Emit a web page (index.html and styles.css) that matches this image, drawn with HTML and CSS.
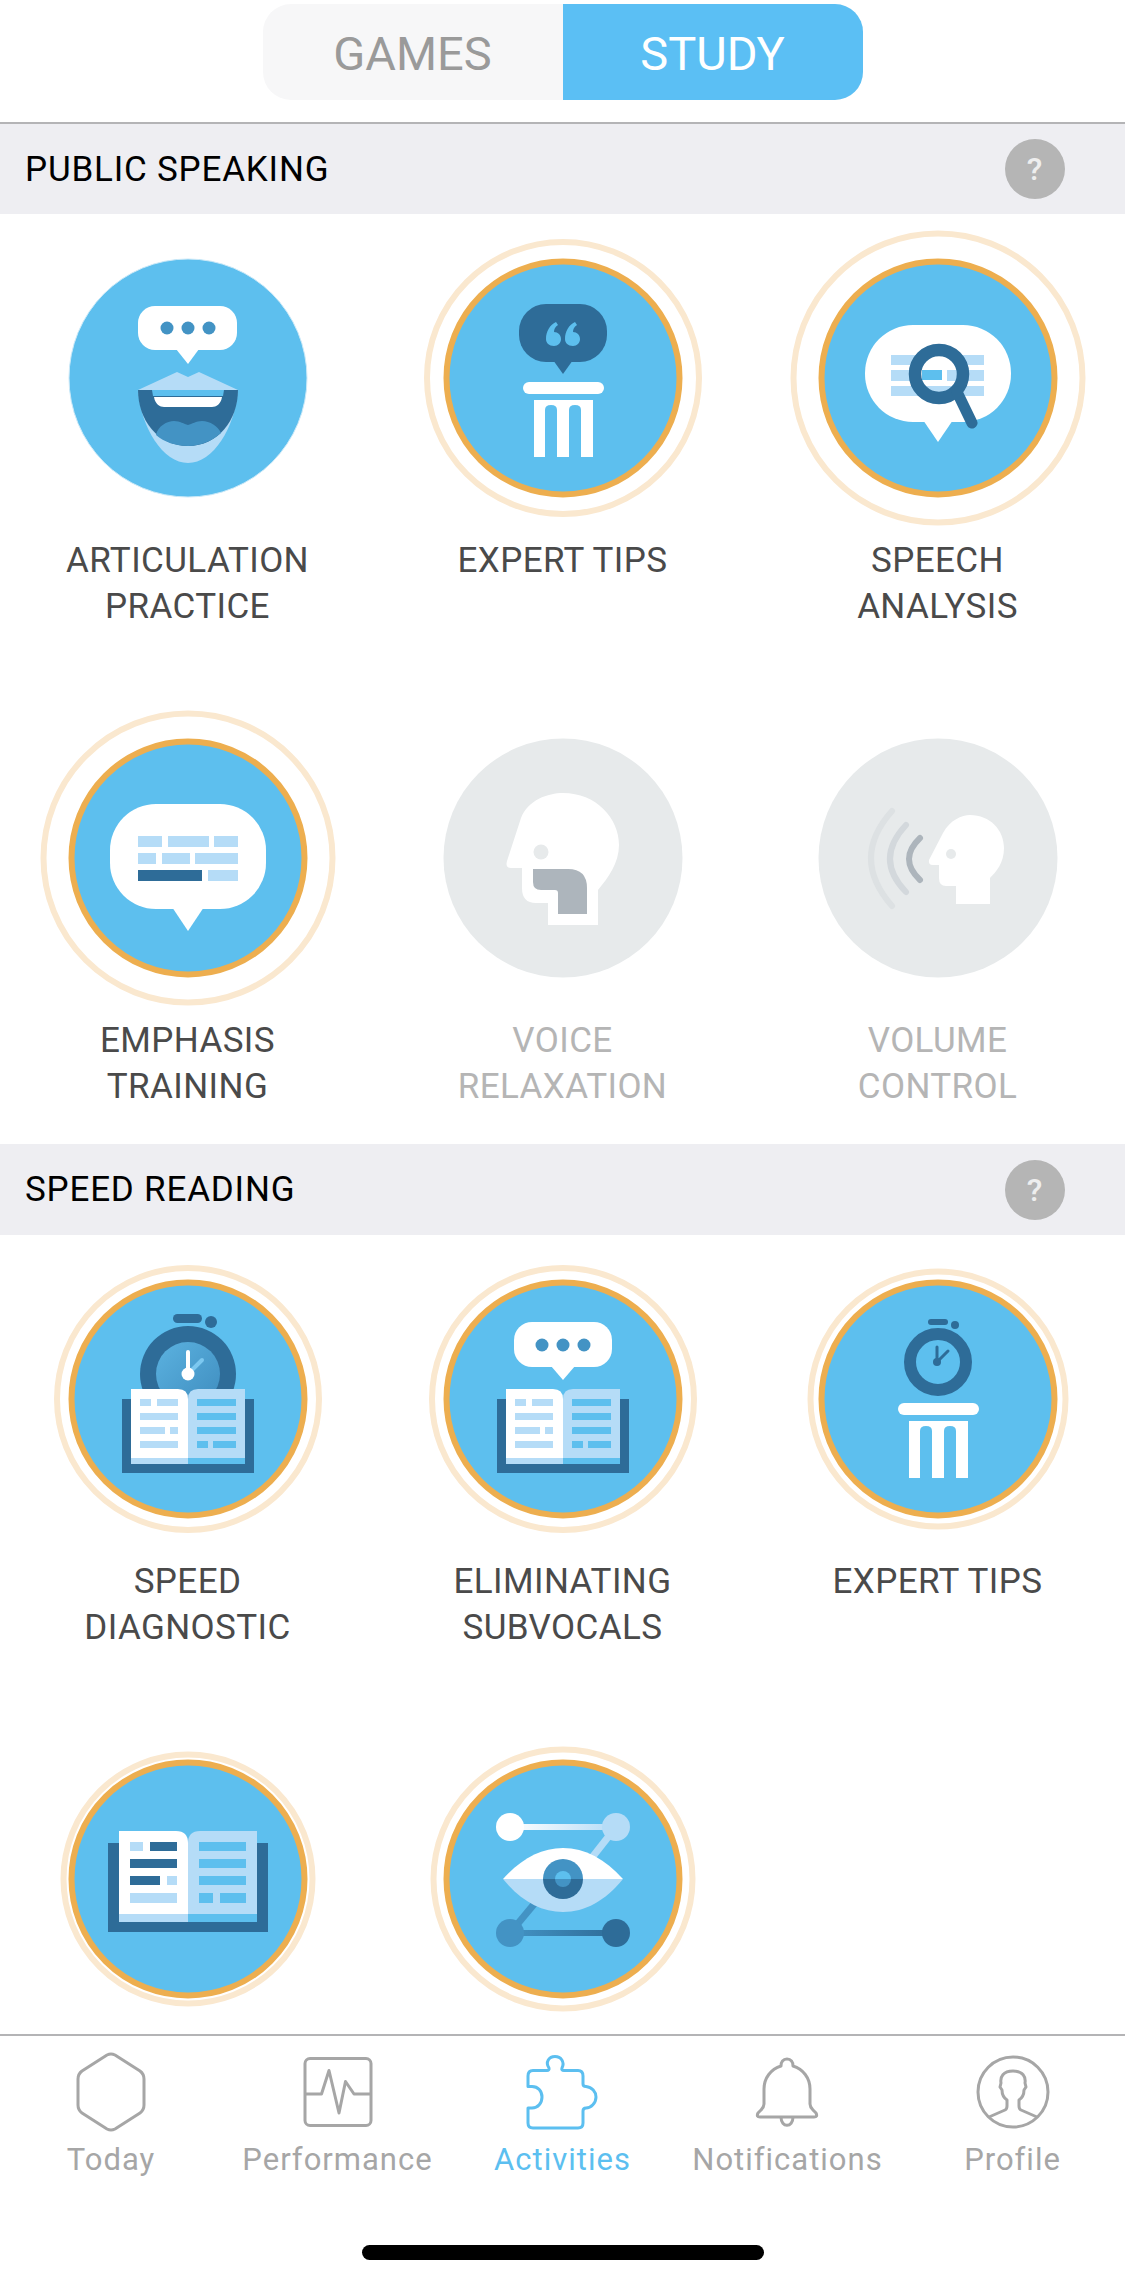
FILE: index.html
```html
<!DOCTYPE html>
<html lang="en">
<head>
    <meta charset="UTF-8">
    <title>Activities</title>
    <link rel="stylesheet" href="styles.css">
</head>
<body>

<svg class="defs" width="0" height="0">
    <defs>
        <linearGradient id="dial" x1="0" y1="0" x2="1" y2="1">
            <stop offset="0" stop-color="#5bb2e0"/>
            <stop offset="1" stop-color="#3f8dbf"/>
        </linearGradient>
        <linearGradient id="lineTop" x1="0" y1="0" x2="1" y2="0">
            <stop offset="0" stop-color="#ffffff"/>
            <stop offset="1" stop-color="#b5dcf7"/>
        </linearGradient>
        <linearGradient id="lineBottom" x1="0" y1="0" x2="1" y2="0">
            <stop offset="0" stop-color="#4393c4"/>
            <stop offset="1" stop-color="#2e6c98"/>
        </linearGradient>
        <clipPath id="lens"><circle cx="1" cy="-4" r="19"/></clipPath>
        <clipPath id="eyeTop"><rect x="-70" y="-40" width="140" height="40"/></clipPath>
        <clipPath id="eyeBottom"><rect x="-70" y="0" width="140" height="40"/></clipPath>

        <!-- open book, the small one -->
        <g id="book">
            <rect class="dark" x="-66" y="0" width="132" height="74"/>
            <path class="white" d="M-57 -10 H-10 Q0 -10 0 0 V65 H-57 Z"/>
            <path class="light" d="M57 -10 H10 Q0 -10 0 0 V65 H57 Z"/>
            <rect class="light" x="-57" y="59" width="57" height="6"/>
            <rect class="blue" x="0" y="59" width="57" height="6"/>
            <rect class="light" x="-48" y="0" width="11" height="7"/>
            <rect class="light" x="-31" y="0" width="21" height="7"/>
            <rect class="light" x="-48" y="14" width="38" height="7"/>
            <rect class="light" x="-48" y="28" width="25" height="7"/>
            <rect class="light" x="-18" y="28" width="8" height="7"/>
            <rect class="light" x="-48" y="42" width="38" height="7"/>
            <rect class="blue" x="9" y="0" width="39" height="7"/>
            <rect class="blue" x="9" y="14" width="39" height="7"/>
            <rect class="blue" x="9" y="28" width="39" height="7"/>
            <rect class="blue" x="9" y="42" width="11" height="7"/>
            <rect class="blue" x="25" y="42" width="23" height="7"/>
        </g>

        <!-- pillar, used by both expert tips -->
        <g id="pillar">
            <rect class="white" x="-40" y="4" width="81" height="12" rx="6"/>
            <path class="white" fill-rule="evenodd" d="M-29 22 H30 V79 H18 V32 Q18 27 12 27 Q6 27 6 32 V79 H-6 V32 Q-6 27 -12 27 Q-18 27 -18 32 V79 H-29 Z"/>
        </g>
    </defs>
</svg>

<div class="app">
    <div class="content">
        <div class="topbar">
            <div class="toggle">
                <div class="toggle-item">GAMES</div>
                <div class="toggle-item active">STUDY</div>
            </div>
        </div>

        <div class="section-head">
            <span>PUBLIC SPEAKING</span>
            <span class="help">?</span>
        </div>
        <div class="grid">
            <div class="item">
                <svg class="badge" viewBox="-150 -150 300 300">
                    <circle class="disc-new" r="119"/>
                    <rect class="white" x="-50" y="-72" width="99" height="44" rx="17"/>
                    <path class="white" d="M-12 -29 H11 L0 -14 Z"/>
                    <circle class="mid" cx="-21" cy="-50" r="6.5"/>
                    <circle class="mid" cx="0" cy="-50" r="6.5"/>
                    <circle class="mid" cx="21" cy="-50" r="6.5"/>
                    <path class="light" d="M-50 12 C-47 50 -25 85 0 85 C25 85 47 50 50 12 Z"/>
                    <path class="dark" d="M-50 12 H50 C50 42 30 68 0 68 C-30 68 -50 42 -50 12 Z"/>
                    <path class="light" d="M-50 12 L-11 -6 L0 -1 L11 -6 L50 12 Z"/>
                    <path class="blue" d="M-36 12 H36 L35 18 H-35 Z"/>
                    <path class="white" d="M-34 19 H34 C33 26 28 29 24 29 H-24 C-28 29 -33 26 -34 19 Z"/>
                    <path class="mid" d="M-32 57 C-30 48 -21 43 -14 43 C-8 43 -4 46 0 47 C4 46 8 43 14 43 C22 43 30 48 33 55 C24 63 12 68 0 68 C-12 68 -24 64 -32 57 Z"/>
                </svg>
                <div class="label">ARTICULATION<br>PRACTICE</div>
            </div>
            <div class="item">
                <svg class="badge" viewBox="-150 -150 300 300">
                    <circle class="halo" r="136"/>
                    <circle class="disc" r="116.5"/>
                    <rect class="dark" x="-44" y="-74" width="88" height="58" rx="27"/>
                    <path class="dark" d="M-10 -18 H10 L0 -4 Z"/>
                    <path class="blue" d="M-17 -39 C-17 -47 -13 -53 -7 -56 L-5 -53 C-8 -51 -9 -49 -9 -46 C-5 -46 -2 -43 -2 -39 C-2 -35 -5 -32 -9 -32 C-14 -32 -17 -35 -17 -39 Z"/>
                    <path class="blue" d="M2 -39 C2 -47 6 -53 12 -56 L14 -53 C11 -51 10 -49 10 -46 C14 -46 17 -43 17 -39 C17 -35 14 -32 10 -32 C5 -32 2 -35 2 -39 Z"/>
                    <use href="#pillar"/>
                </svg>
                <div class="label">EXPERT TIPS</div>
            </div>
            <div class="item">
                <svg class="badge" viewBox="-150 -150 300 300">
                    <circle class="halo" r="144.5"/>
                    <circle class="disc" r="116.5"/>
                    <rect class="white" x="-73" y="-53" width="146" height="97" rx="48"/>
                    <path class="white" d="M-15 42 H15 L0 64 Z"/>
                    <rect class="light" x="-47" y="-23" width="93" height="10"/>
                    <rect class="light" x="-47" y="-8" width="93" height="11"/>
                    <rect class="light" x="-47" y="8" width="93" height="10"/>
                    <circle class="white" cx="1" cy="-4" r="19"/>
                    <g clip-path="url(#lens)">
                        <rect class="light" x="-20" y="8" width="40" height="10"/>
                        <rect class="blue" x="-16" y="-8" width="20" height="10"/>
                        <rect class="light" x="9" y="-8" width="12" height="11"/>
                    </g>
                    <circle class="ring-dark" cx="1" cy="-4" r="24" stroke-width="12.5"/>
                    <path class="ring-dark" stroke-width="11" stroke-linecap="round" d="M19 14 L34 45"/>
                </svg>
                <div class="label">SPEECH<br>ANALYSIS</div>
            </div>
            <div class="item">
                <svg class="badge" viewBox="-150 -150 300 300">
                    <circle class="halo" r="144.5"/>
                    <circle class="disc" r="116.5"/>
                    <rect class="white" x="-78" y="-54" width="156" height="105" rx="46"/>
                    <path class="white" d="M-16 49 H16 L0 73 Z"/>
                    <rect class="light" x="-50" y="-22" width="24" height="11"/>
                    <rect class="light" x="-20" y="-22" width="41" height="11"/>
                    <rect class="light" x="26" y="-22" width="24" height="11"/>
                    <rect class="light" x="-50" y="-5" width="18" height="11"/>
                    <rect class="light" x="-26" y="-5" width="28" height="11"/>
                    <rect class="light" x="7" y="-5" width="43" height="11"/>
                    <rect class="dark" x="-50" y="12" width="64" height="11"/>
                    <rect class="light" x="20" y="12" width="30" height="11"/>
                </svg>
                <div class="label">EMPHASIS<br>TRAINING</div>
            </div>
            <div class="item locked">
                <svg class="badge" viewBox="-150 -150 300 300">
                    <circle class="disc-off" r="119.5"/>
                    <path class="white" d="M35 67 H-15 V45 H-27 Q-41 45 -41 30 V10 H-52 Q-58 10 -56 3 L-42 -40 C-35 -58 -15 -65 0 -65 C33 -65 56 -40 56 -13 C56 5 45 20 35 32 Z"/>
                    <ellipse class="off-bg" cx="-22" cy="-6" rx="7.5" ry="7.5"/>
                    <path class="off-dark" d="M-30 11 H5 Q24 11 24 30 V56 H-5 V35 Q-5 32 -8 32 H-22 Q-30 32 -30 24 Z"/>
                </svg>
                <div class="label">VOICE<br>RELAXATION</div>
            </div>
            <div class="item locked">
                <svg class="badge" viewBox="-150 -150 300 300">
                    <circle class="disc-off" r="119.5"/>
                    <path class="white" d="M52 46 H18 V28 H8 Q1 28 1 20 V7 H-5 Q-10 7 -9 2 L5 -25 C12 -38 24 -43 32 -43 C52 -43 66 -28 66 -10 C66 5 58 14 52 20 Z"/>
                    <circle class="off-bg" cx="13" cy="-4" r="5"/>
                    <path class="wave wave-1" d="M-18 -20 Q-40 1 -18 22"/>
                    <path class="wave wave-2" d="M-32 -33 Q-64 1 -32 34"/>
                    <path class="wave wave-3" d="M-46 -47 Q-88 0 -46 48"/>
                </svg>
                <div class="label">VOLUME<br>CONTROL</div>
            </div>
        </div>

        <div class="section-head">
            <span>SPEED READING</span>
            <span class="help">?</span>
        </div>
        <div class="grid">
            <div class="item">
                <svg class="badge" viewBox="-150 -150 300 300">
                    <circle class="halo" r="131"/>
                    <circle class="disc" r="116.5"/>
                    <rect class="dark" x="-15" y="-85" width="29" height="9" rx="4.5"/>
                    <circle class="dark" cx="23" cy="-77" r="6"/>
                    <circle class="dark" cx="0" cy="-25" r="48"/>
                    <circle cx="0" cy="-25" r="32" fill="url(#dial)"/>
                    <path class="hand-soft" d="M0 -25 L14 -39"/>
                    <path class="hand" d="M0 -25 V-47"/>
                    <circle class="white" cx="0" cy="-25" r="6.5"/>
                    <use href="#book"/>
                </svg>
                <div class="label">SPEED<br>DIAGNOSTIC</div>
            </div>
            <div class="item">
                <svg class="badge" viewBox="-150 -150 300 300">
                    <circle class="halo" r="131"/>
                    <circle class="disc" r="116.5"/>
                    <rect class="white" x="-49" y="-77" width="98" height="45" rx="18"/>
                    <path class="white" d="M-12 -33 H12 L0 -19 Z"/>
                    <circle class="mid" cx="-21" cy="-54" r="6.5"/>
                    <circle class="mid" cx="0" cy="-54" r="6.5"/>
                    <circle class="mid" cx="21" cy="-54" r="6.5"/>
                    <use href="#book"/>
                </svg>
                <div class="label">ELIMINATING<br>SUBVOCALS</div>
            </div>
            <div class="item">
                <svg class="badge" viewBox="-150 -150 300 300">
                    <circle class="halo" r="127.5"/>
                    <circle class="disc" r="116.5"/>
                    <rect class="dark" x="-10" y="-80" width="20" height="6" rx="3"/>
                    <circle class="dark" cx="17" cy="-74" r="4"/>
                    <circle class="ring-dark" cx="0" cy="-37" r="28" stroke-width="12"/>
                    <path class="hand-dark" d="M-1 -37 V-52"/>
                    <path class="hand-dark" d="M-1 -37 L10 -48"/>
                    <circle class="dark" cx="-1" cy="-37" r="4"/>
                    <use href="#pillar"/>
                </svg>
                <div class="label">EXPERT TIPS</div>
            </div>
            <div class="item">
                <svg class="badge" viewBox="-150 -150 300 300">
                    <circle class="halo" r="124.5"/>
                    <circle class="disc" r="116.5"/>
                    <rect class="dark" x="-80" y="-36" width="160" height="89"/>
                    <path class="white" d="M-69 -48 H-12 Q0 -48 0 -36 V43 H-69 Z"/>
                    <path class="light" d="M69 -48 H12 Q0 -48 0 -36 V43 H69 Z"/>
                    <rect class="light" x="-69" y="35" width="69" height="8"/>
                    <rect class="blue" x="0" y="35" width="69" height="8"/>
                    <rect class="light" x="-58" y="-37" width="13" height="9"/>
                    <rect class="dark" x="-38" y="-37" width="27" height="9"/>
                    <rect class="dark" x="-58" y="-20" width="47" height="9"/>
                    <rect class="dark" x="-58" y="-3" width="30" height="9"/>
                    <rect class="light" x="-21" y="-3" width="10" height="9"/>
                    <rect class="light" x="-58" y="14" width="47" height="10"/>
                    <rect class="blue" x="11" y="-37" width="47" height="9"/>
                    <rect class="blue" x="11" y="-20" width="47" height="9"/>
                    <rect class="blue" x="11" y="-3" width="47" height="9"/>
                    <rect class="blue" x="11" y="14" width="14" height="10"/>
                    <rect class="blue" x="32" y="14" width="26" height="10"/>
                </svg>
            </div>
            <div class="item">
                <svg class="badge" viewBox="-150 -150 300 300">
                    <circle class="halo" r="129.5"/>
                    <circle class="disc" r="116.5"/>
                    <path class="link-light" d="M53 -52 L20 -10"/>
                    <path class="link-mid" d="M-53 54 L-18 12"/>
                    <rect x="-53" y="-55" width="106" height="6" fill="url(#lineTop)"/>
                    <rect x="-53" y="51" width="106" height="6" fill="url(#lineBottom)"/>
                    <circle class="white" cx="-53" cy="-52" r="14"/>
                    <circle class="light" cx="53" cy="-52" r="14"/>
                    <circle class="mid" cx="-53" cy="54" r="14"/>
                    <circle class="dark" cx="53" cy="54" r="14"/>
                    <path class="white" d="M-60 0 C-42 -20 -22 -31 0 -31 C22 -31 42 -20 60 0 Z"/>
                    <path class="light" d="M-60 0 C-42 22 -22 33 0 33 C22 33 42 22 60 0 Z"/>
                    <circle class="mid" r="20" clip-path="url(#eyeTop)"/>
                    <circle class="dark" r="20" clip-path="url(#eyeBottom)"/>
                    <circle class="mid" r="8"/>
                    <circle class="blue" r="8" clip-path="url(#eyeTop)"/>
                </svg>
            </div>
        </div>
    </div>

    <div class="tabbar">
        <div class="tab tab-first">
            <svg class="tab-icon" viewBox="-40 -40 80 80">
                <path d="M-4 -37 Q0 -39 4 -37 L29 -21 Q33 -18 33 -13 V13 Q33 18 29 21 L4 37 Q0 39 -4 37 L-29 21 Q-33 18 -33 13 V-13 Q-33 -18 -29 -21 Z"/>
            </svg>
            <div>Today</div>
        </div>
        <div class="tab">
            <svg class="tab-icon" viewBox="-40 -40 80 80">
                <rect x="-33" y="-33.5" width="66" height="67" rx="5"/>
                <path d="M-33 2 H-16.5 L-9 -21.5 L1 21 L7.5 -10.5 L16 2 H33"/>
            </svg>
            <div>Performance</div>
        </div>
        <div class="tab active">
            <svg class="tab-icon" viewBox="-40 -40 80 80">
                <path d="M-35 -16 Q-35 -21.5 -30 -21.5 H-16 Q-13.5 -21.5 -14 -24 C-18 -30 -14 -35.5 -8 -35.5 C-2 -35.5 2 -30 -1 -24 Q-2 -21.5 1 -21.5 H15 Q20 -21.5 20 -16 V-8 Q20 -5.5 23 -5.5 C29 -5 33 0 33 5 C33 11 28 16 23 16 Q20 16 20 19 V31 Q20 36 15 36 H-30 Q-35 36 -35 31 V16 H-31 C-25 16 -21 11 -21 5 C-21 -1 -25 -5.5 -31 -5.5 H-35 Z"/>
            </svg>
            <div>Activities</div>
        </div>
        <div class="tab">
            <svg class="tab-icon" viewBox="-39 -40 80 80">
                <path d="M0 -33 C-4 -33 -6 -30 -6 -26 C-16 -23 -23 -14 -23 -3 V12 Q-23 15 -26 18 L-29 21 Q-31 25 -27 25 H27 Q31 25 29 21 L26 18 Q23 15 23 12 V-3 C23 -14 16 -23 6 -26 C6 -30 4 -33 0 -33 Z"/>
                <path d="M-6 25 C-6 36 6 36 6 25"/>
            </svg>
            <div>Notifications</div>
        </div>
        <div class="tab">
            <svg class="tab-icon" viewBox="-40 -40 80 80">
                <circle r="35"/>
                <path d="M-24 25 L-8 18 Q-6 17 -6 14 V8 C-9 6 -11 2 -11 -2 L-13 -5 L-12 -9 C-13 -15 -10 -21 0 -21 C10 -21 13 -15 12 -9 L13 -5 L11 -2 C11 2 9 6 6 8 V14 Q6 17 8 18 L24 25"/>
            </svg>
            <div>Profile</div>
        </div>
    </div>
    <div class="home-bar"></div>
</div>

</body>
</html>
```

FILE: styles.css
```css
body {
    margin: 0;
    background-color: #fff;
    font-family: Roboto, "Liberation Sans", sans-serif;
}
.defs {
    display: block;
    height: 0;
}
.app {
    width: 1125px;
    height: 2284px;
    display: flex;
    flex-direction: column;
    overflow: hidden;
    position: relative;
}
.content {
    flex: 1;
    overflow: hidden;
}

/* top switch */
.topbar {
    height: 124px;
    box-sizing: border-box;
    padding-top: 4px;
    display: flex;
    justify-content: center;
    border-bottom: 2px solid #b4b4b6;
}
.toggle {
    width: 600px;
    height: 96px;
    display: flex;
    border-radius: 28px;
    overflow: hidden;
    background-color: #f7f7f8;
}
.toggle-item {
    flex: 1;
    display: flex;
    align-items: center;
    justify-content: center;
    padding-top: 3px;
    font-size: 47px;
    color: #9a9a9a;
}
.toggle-item.active {
    background-color: #5bbff4;
    color: #fff;
}

/* section headers */
.section-head {
    height: 90px;
    box-sizing: border-box;
    padding: 0 60px 0 25px;
    display: flex;
    align-items: center;
    justify-content: space-between;
    background-color: #eeeef2;
    font-size: 35px;
    letter-spacing: 0.8px;
    color: #000;
}
.section-head + .grid + .section-head {
    height: 91px;
}
.help {
    width: 60px;
    height: 60px;
    border-radius: 50%;
    background-color: #b5b5b5;
    color: #eee;
    font-size: 32px;
    font-weight: 500;
    display: flex;
    align-items: center;
    justify-content: center;
}

/* activity grid */
.grid {
    display: grid;
    grid-template-columns: repeat(3, 375px);
    grid-auto-rows: 413px;
    row-gap: 67px;
    padding: 14px 0 23px;
}
.item {
    display: flex;
    flex-direction: column;
    align-items: center;
}
.badge {
    width: 300px;
    height: 300px;
    flex: none;
}
.label {
    margin-top: 10px;
    font-size: 35px;
    line-height: 46px;
    text-align: center;
    color: #4a4a4a;
    letter-spacing: 0.4px;
}
.locked .label {
    color: #b5b5b5;
}

/* badge colours */
.disc {
    fill: #5dbfee;
    stroke: #edae4f;
    stroke-width: 6;
}
.disc-new {
    fill: #5dbfee;
    stroke: #cbe9f8;
    stroke-width: 1;
}
.disc-off {
    fill: #e7eaeb;
}
.halo {
    fill: none;
    stroke: #fae8cf;
    stroke-width: 6;
}
.white { fill: #fff; }
.blue { fill: #5dbfee; }
.light { fill: #b5dcf7; }
.mid { fill: #4393c4; }
.dark { fill: #2e6c98; }
.off-bg { fill: #e7eaeb; }
.off-dark { fill: #adb5bc; }
.ring-dark {
    fill: none;
    stroke: #2e6c98;
}
.hand {
    stroke: #fff;
    stroke-width: 4;
    stroke-linecap: round;
}
.hand-soft {
    stroke: #7cc8f0;
    stroke-width: 4;
    stroke-linecap: round;
}
.hand-dark {
    stroke: #2e6c98;
    stroke-width: 3;
    stroke-linecap: round;
}
.link-light {
    stroke: #b5dcf7;
    stroke-width: 7;
}
.link-mid {
    stroke: #4393c4;
    stroke-width: 7;
}
.wave {
    fill: none;
    stroke-width: 6;
    stroke-linecap: round;
}
.wave-1 { stroke: #adb5bc; }
.wave-2 { stroke: #d3d8dc; }
.wave-3 { stroke: #dde1e3; }

/* bottom tabs */
.tabbar {
    height: 250px;
    box-sizing: border-box;
    flex: none;
    border-top: 2px solid #b4b4b6;
    padding-top: 16px;
    display: grid;
    grid-template-columns: repeat(5, 225px);
    align-items: start;
}
.tab {
    display: flex;
    flex-direction: column;
    align-items: center;
    font-size: 31px;
    line-height: 36px;
    letter-spacing: 1px;
    color: #a6a6a6;
}
.tab-first {
    margin-right: 3px;
}
.tab.active {
    color: #5cbff0;
}
.tab-icon {
    width: 80px;
    height: 80px;
    margin-bottom: 10px;
    fill: none;
    stroke: #a6a6a6;
    stroke-width: 3;
    stroke-linejoin: round;
}
.tab.active .tab-icon {
    stroke: #5cbff0;
}
.home-bar {
    position: absolute;
    left: 362px;
    bottom: 24px;
    width: 402px;
    height: 15px;
    border-radius: 8px;
    background-color: #000;
}
```
